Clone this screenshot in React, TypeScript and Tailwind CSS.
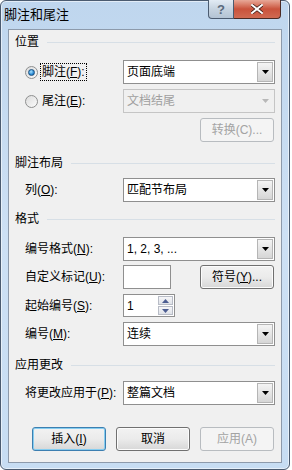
import type { ReactNode } from 'react'

const font = { fontFamily: '"Liberation Sans", "Noto Sans CJK SC", sans-serif' }

function Arrow({ disabled }: { disabled?: boolean }) {
  return (
    <svg width="7" height="4" viewBox="0 0 7 4">
      <polygon points="0,0 7,0 3.5,4" fill={disabled ? '#b8b8b8' : '#000'} />
    </svg>
  )
}

function Combo({ value, disabled }: { value: string; disabled?: boolean }) {
  return (
    <div
      className={`flex h-6 w-[152px] items-stretch border ${
        disabled ? 'border-[#c5c5c5] bg-[#f0f0f0] text-[#a0a0a0]' : 'border-[#8f8f8f] bg-white text-black'
      }`}
    >
      <div className="flex flex-1 items-center pl-[3px] text-[12px] leading-none">{value}</div>
      <div
        className={`m-px flex w-[16px] items-center justify-center border ${
          disabled
            ? 'border-transparent'
            : 'border-[#b5b5b5] bg-gradient-to-b from-[#f4f4f4] to-[#d6d6d6]'
        }`}
      >
        <Arrow disabled={disabled} />
      </div>
    </div>
  )
}

function Btn({
  children,
  primary,
  disabled,
}: {
  children: ReactNode
  primary?: boolean
  disabled?: boolean
}) {
  return (
    <div
      className={`flex h-6 w-[74px] items-center justify-center rounded-[3px] border text-[12px] leading-none ${
        disabled
          ? 'border-[#b8bcc0] bg-[#f4f4f4] text-[#a3a3a3]'
          : primary
            ? 'border-[#3c7fb1] bg-gradient-to-b from-[#f2f2f2] via-[#ebebeb] to-[#d7d7d7] shadow-[inset_0_0_0_1px_#86cdf0] text-black'
            : 'border-[#707070] bg-gradient-to-b from-[#f2f2f2] via-[#ebebeb] to-[#d7d7d7] shadow-[inset_0_0_0_1px_#fcfcfc] text-black'
      }`}
    >
      {children}
    </div>
  )
}

function Header({ title }: { title: string }) {
  return (
    <div className="flex h-4 items-center gap-2">
      <span className="text-[12px] leading-none">{title}</span>
      <div className="h-px flex-1 bg-[#d7dfe6]" />
    </div>
  )
}

function Row({ label, children, className }: { label: ReactNode; children: ReactNode; className: string }) {
  return (
    <div className={`flex items-center ${className}`}>
      <div className="w-[108px] whitespace-nowrap pl-[10px] text-[12px] leading-none">{label}</div>
      {children}
    </div>
  )
}

function Radio({ checked }: { checked?: boolean }) {
  return (
    <div className="flex h-[13px] w-[13px] items-center justify-center rounded-full border border-[#8e8f8f] bg-gradient-to-br from-[#dcdcdc] to-[#fbfbfb]">
      {checked && (
        <div className="h-[7px] w-[7px] rounded-full border border-[#1c5180] bg-[radial-gradient(circle_at_40%_35%,#a8e2ff,#2a8ad4_60%,#0e4f93)]" />
      )}
    </div>
  )
}

export default function App() {
  return (
    <div className="h-[470px] w-[292px] bg-white" style={font}>
      <div className="flex h-[470px] w-[290px] flex-col rounded-[6px] border border-[#4b5b70] bg-gradient-to-b from-[#bfd6ee] via-[#cde0f4] to-[#c7ddf3] shadow-[inset_0_0_0_1px_rgba(255,255,255,0.55)]">
        {/* Title bar */}
        <div className="flex h-[28px] items-start justify-between">
          <div className="pl-[3px] pt-[7px] text-[13px] leading-none text-black">脚注和尾注</div>
          <div className="-mt-px mr-[8px] flex">
            <div className="flex h-[19px] w-[26px] items-center justify-center rounded-bl-[4px] border border-t-0 border-[#4b5b70] bg-gradient-to-b from-[#e2ebf4] via-[#c6d3e0] to-[#b3c3d4] text-[13px] font-bold leading-none text-[#5a6a7c]">
              ?
            </div>
            <div className="flex h-[19px] w-[47px] items-center justify-center rounded-br-[4px] border border-l-0 border-t-0 border-[#4b2a24] bg-gradient-to-b from-[#e7a898] via-[#c9523c] to-[#d06a52]">
              <svg width="12" height="10" viewBox="0 0 12 10">
                <path d="M1 1 L11 9 M11 1 L1 9" stroke="#3b1a14" strokeWidth="3.4" strokeLinecap="square" />
                <path d="M1 1 L11 9 M11 1 L1 9" stroke="#fff" strokeWidth="2" strokeLinecap="square" />
              </svg>
            </div>
          </div>
        </div>

        {/* Client area */}
        <div className="mx-[7px] flex h-[434px] flex-col border border-[#8d9aab] bg-[#f0f0f0] px-[6px] text-black">
          <div className="mt-[4px]">
            <Header title="位置" />
          </div>

          <div className="mt-[10px] flex items-center">
            <div className="flex w-[108px] items-center pl-[10px]">
              <Radio checked />
              <span className="ml-[2px] border border-dotted border-[#000] px-px py-[2px] text-[12px] leading-none">
                脚注(<u>F</u>):
              </span>
            </div>
            <Combo value="页面底端" />
          </div>

          <div className="mt-[5px] flex items-center">
            <div className="flex w-[108px] items-center pl-[10px]">
              <Radio />
              <span className="ml-[3px] px-px text-[12px] leading-none">
                尾注(<u>E</u>):
              </span>
            </div>
            <Combo value="文档结尾" disabled />
          </div>

          <div className="mt-[5px] flex justify-end pr-px">
            <Btn disabled>转换(C)...</Btn>
          </div>

          <div className="mt-[13px]">
            <Header title="脚注布局" />
          </div>

          <Row label={<>列(<u>O</u>):</>} className="mt-[7px]">
            <Combo value="匹配节布局" />
          </Row>

          <div className="mt-[9px]">
            <Header title="格式" />
          </div>

          <Row label={<>编号格式(<u>N</u>):</>} className="mt-[10px]">
            <Combo value="1, 2, 3, ..." />
          </Row>

          <Row label={<>自定义标记(<u>U</u>):</>} className="mt-[4px]">
            <div className="h-6 w-[48px] border border-[#8f8f8f] bg-white" />
            <div className="ml-auto pr-px">
              <Btn>
                符号(<u>Y</u>)...
              </Btn>
            </div>
          </Row>

          <Row label={<>起始编号(<u>S</u>):</>} className="mt-[5px]">
            <div className="flex h-[23px] w-[52px] items-stretch border border-[#8f8f8f] bg-white">
              <div className="flex flex-1 items-center pl-[3px] text-[12px] leading-none">1</div>
              <div className="m-px flex w-[15px] flex-col gap-px">
                <div className="flex flex-1 items-center justify-center border border-[#b8bcc6] bg-gradient-to-b from-[#f6f6f8] to-[#dfe2e8]">
                  <svg width="7" height="4" viewBox="0 0 7 4">
                    <polygon points="0,4 7,4 3.5,0" fill="#4d5e92" />
                  </svg>
                </div>
                <div className="flex flex-1 items-center justify-center border border-[#b8bcc6] bg-gradient-to-b from-[#f6f6f8] to-[#dfe2e8]">
                  <svg width="7" height="4" viewBox="0 0 7 4">
                    <polygon points="0,0 7,0 3.5,4" fill="#4d5e92" />
                  </svg>
                </div>
              </div>
            </div>
          </Row>

          <Row label={<>编号(<u>M</u>):</>} className="mt-[5px]">
            <Combo value="连续" />
          </Row>

          <div className="mt-[11px]">
            <Header title="应用更改" />
          </div>

          <Row label={<>将更改应用于(<u>P</u>):</>} className="mt-[8px]">
            <Combo value="整篇文档" />
          </Row>

          <div className="mt-[22px] flex justify-end gap-[10px] pr-px">
            <Btn primary>
              插入(<u>I</u>)
            </Btn>
            <Btn>取消</Btn>
            <Btn disabled>应用(A)</Btn>
          </div>
        </div>
      </div>
    </div>
  )
}
